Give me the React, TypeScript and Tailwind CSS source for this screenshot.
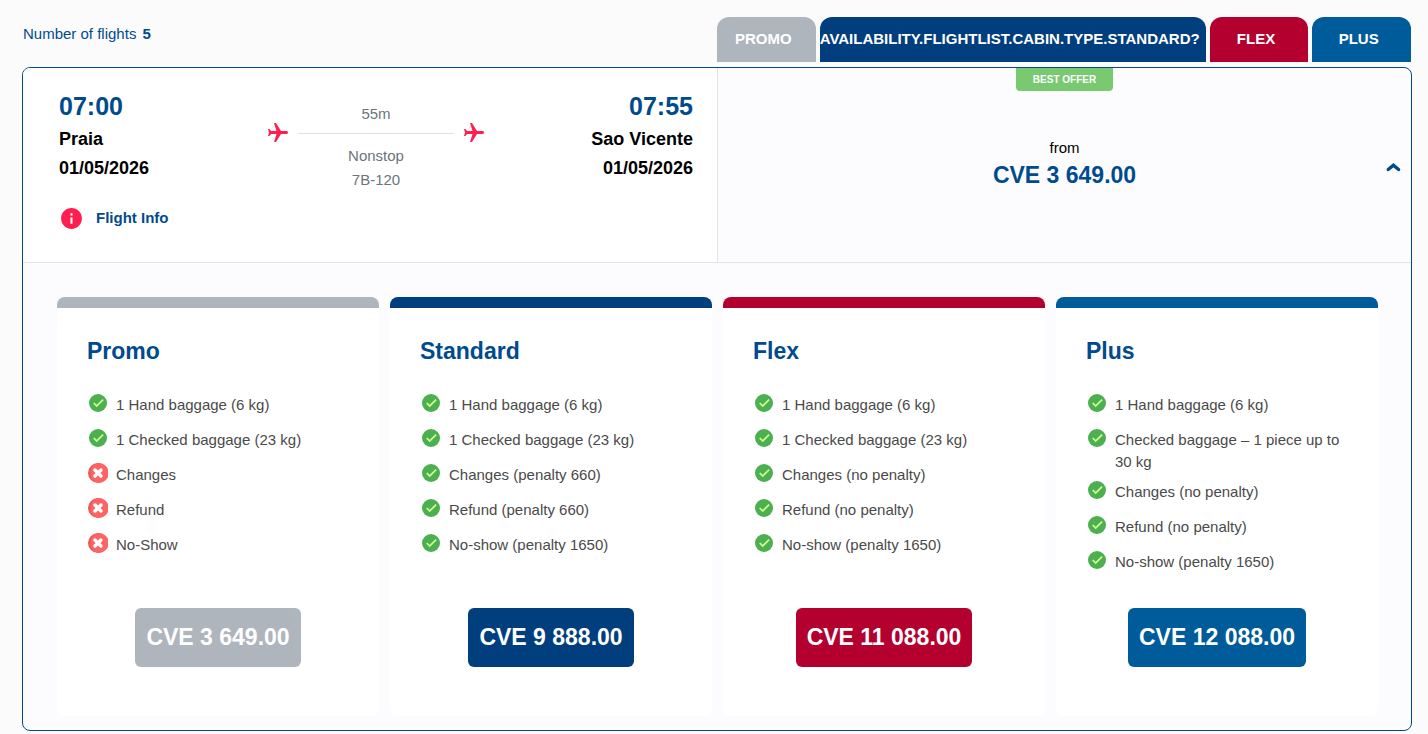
import { useState } from "react";
import { MdFlight, MdInfo } from "react-icons/md";

type Feature = { text: string; included: boolean };
type Fare = {
  name: string;
  tab: string;
  tabWidth: string;
  color: string;
  price: string;
  features: Feature[];
};

const yes = (text: string): Feature => ({ text, included: true });
const no = (text: string): Feature => ({ text, included: false });

const fares: Fare[] = [
  {
    name: "Promo",
    tab: "PROMO",
    tabWidth: "w-[99px]",
    color: "bg-[#aeb5bd]",
    price: "CVE 3 649.00",
    features: [yes("1 Hand baggage (6 kg)"), yes("1 Checked baggage (23 kg)"), no("Changes"), no("Refund"), no("No-Show")],
  },
  {
    name: "Standard",
    tab: "AVAILABILITY.FLIGHTLIST.CABIN.TYPE.STANDARD?",
    tabWidth: "flex-1",
    color: "bg-[#003e7e]",
    price: "CVE 9 888.00",
    features: [
      yes("1 Hand baggage (6 kg)"),
      yes("1 Checked baggage (23 kg)"),
      yes("Changes (penalty 660)"),
      yes("Refund (penalty 660)"),
      yes("No-show (penalty 1650)"),
    ],
  },
  {
    name: "Flex",
    tab: "FLEX",
    tabWidth: "w-[99px]",
    color: "bg-[#b3002f]",
    price: "CVE 11 088.00",
    features: [
      yes("1 Hand baggage (6 kg)"),
      yes("1 Checked baggage (23 kg)"),
      yes("Changes (no penalty)"),
      yes("Refund (no penalty)"),
      yes("No-show (penalty 1650)"),
    ],
  },
  {
    name: "Plus",
    tab: "PLUS",
    tabWidth: "w-[99px]",
    color: "bg-[#005b9a]",
    price: "CVE 12 088.00",
    features: [
      yes("1 Hand baggage (6 kg)"),
      yes("Checked baggage – 1 piece up to 30 kg"),
      yes("Changes (no penalty)"),
      yes("Refund (no penalty)"),
      yes("No-show (penalty 1650)"),
    ],
  },
];

function CheckIcon() {
  return (
    <svg viewBox="0.67 0.67 46.67 46.67" className="size-5 shrink-0" aria-hidden="true">
      <circle cx="24" cy="24" r="21" fill="#4caf50" />
      <path d="M34.6 14.6 21 28.2l-5.6-5.6-2.8 2.8 8.4 8.4 16.4-16.4z" fill="#ccff90" />
    </svg>
  );
}

function CrossIcon() {
  return (
    <svg viewBox="0 0 20 20" className="size-5 shrink-0" aria-hidden="true">
      <circle cx="10" cy="10" r="10" fill="#e85a5b" />
      <path d="M10.8 0A10 10 0 0 1 10.8 20C5.6 19 2.6 15 2.6 10S5.6 1 10.8 0z" fill="#ff6465" />
      <path d="M7 7 13 13M13 7 7 13" stroke="#fff" strokeWidth="3.4" strokeLinecap="round" />
    </svg>
  );
}

function FareCard({ fare }: { fare: Fare }) {
  return (
    <article className="flex flex-col overflow-hidden rounded-lg bg-white">
      <div className={`h-[11px] ${fare.color}`} />
      <div className="flex flex-1 flex-col px-[30px] pt-7 pb-[49px]">
        <h2 className="text-[23px] leading-[30px] font-bold text-[#004b8d]">{fare.name}</h2>
        <ul className="mt-7 mb-[22px]">
          {fare.features.map((f) => (
            <li key={f.text} className="mb-2 flex min-h-[27px] items-start text-[15px] leading-[22px] text-[#4a4a4a]">
              <span className="mr-[7px] flex h-[18px] w-[22px] shrink-0 items-center justify-center">
                {f.included ? <CheckIcon /> : <CrossIcon />}
              </span>
              <span>{f.text}</span>
            </li>
          ))}
        </ul>
        <button type="button" className={`mt-auto h-[59px] cursor-pointer self-center rounded-md px-[11px] text-[23px] font-bold text-white ${fare.color}`}>
          {fare.price}
        </button>
      </div>
    </article>
  );
}

function Stop({ time, city, date }: { time: string; city: string; date: string }) {
  return (
    <div>
      <p className="text-[25px] leading-8 font-bold text-[#004b8d]">{time}</p>
      <p className="mt-[3px] text-[18px] leading-[29px] font-bold">{city}</p>
      <p className="text-[18px] leading-[29px] font-bold">{date}</p>
    </div>
  );
}

export default function App() {
  const [open, setOpen] = useState(true);

  return (
    <main className="min-h-screen bg-[#fbfbfb] pt-[17px] pr-4 pb-[3px] pl-[22px] font-['Liberation_Sans',Arial,sans-serif] text-black">
      <header className="flex">
        <p className="flex-1 pt-1.5 pl-px text-[15px] leading-[22px] text-[#004b8d]">
          Number of flights <b className="ml-0.5">5</b>
        </p>
        <div className="flex w-1/2 gap-[4px] pr-px">
          {fares.map((fare) => (
            <div
              key={fare.name}
              className={`flex h-[45px] items-center justify-center rounded-t-xl pr-1.5 text-[15px] font-bold whitespace-nowrap text-white ${fare.tabWidth} ${fare.color}`}
            >
              {fare.tab}
            </div>
          ))}
        </div>
      </header>

      <section className="mt-[5px] overflow-hidden rounded-lg border border-[#004b8d] bg-[#fcfcff]">
        <div className="flex border-b border-[#dfe5e8]">
          <div className="w-1/2 rounded-bl-lg bg-white pt-[22px] pr-6 pb-[31px] pl-9">
            <div className="flex">
              <div className="flex-1">
                <Stop time="07:00" city="Praia" date="01/05/2026" />
              </div>
              <div className="w-[220px] pt-3 text-center text-[15px] leading-6 text-[#6c757d]">
                <p>55m</p>
                <div className="flex h-[14px] items-center">
                  <MdFlight className="size-6 rotate-90 text-[#ff1e50]" />
                  <div className="mx-2 h-px flex-1 bg-[#e2e2e2]" />
                  <MdFlight className="size-6 rotate-90 text-[#ff1e50]" />
                </div>
                <p className="mt-1">Nonstop</p>
                <p>7B-120</p>
              </div>
              <div className="flex-1 text-right">
                <Stop time="07:55" city="Sao Vicente" date="01/05/2026" />
              </div>
            </div>
            <button type="button" className="mt-[13px] flex cursor-pointer items-center gap-3 text-[15px] leading-[26px] font-bold text-[#004b8d]">
              <MdInfo className="size-[25px] text-[#ff1e50]" />
              Flight Info
            </button>
          </div>
          <div className="relative flex w-1/2 flex-col items-center border-l border-[#dfe5e8]">
            <span className="rounded-b-[4px] bg-[#78c96f] px-[17px] text-[10px] leading-[23px] font-bold text-white">BEST OFFER</span>
            <p className="mt-[46px] text-[15px] leading-[22px]">from</p>
            <p className="text-[23px] leading-8 font-bold text-[#004b8d]">CVE 3 649.00</p>
            <button
              type="button"
              aria-label="Toggle fares"
              aria-expanded={open}
              onClick={() => setOpen(!open)}
              className="absolute inset-y-0 right-[10px] flex cursor-pointer items-center pt-1"
            >
              <svg viewBox="0 0 16 10" className={`h-[10px] w-4 ${open ? "" : "rotate-180"}`} fill="none" aria-hidden="true">
                <path d="M3.2 7.6 8.4 3.2l5.2 4.4" stroke="#004b8d" strokeWidth="3.3" strokeLinecap="round" strokeLinejoin="miter" />
              </svg>
            </button>
          </div>
        </div>

        {open && (
          <div className="grid grid-cols-4 gap-[11px] pt-[34px] pr-[33px] pb-[14px] pl-[34px]">
            {fares.map((fare) => (
              <FareCard key={fare.name} fare={fare} />
            ))}
          </div>
        )}
      </section>
    </main>
  );
}
